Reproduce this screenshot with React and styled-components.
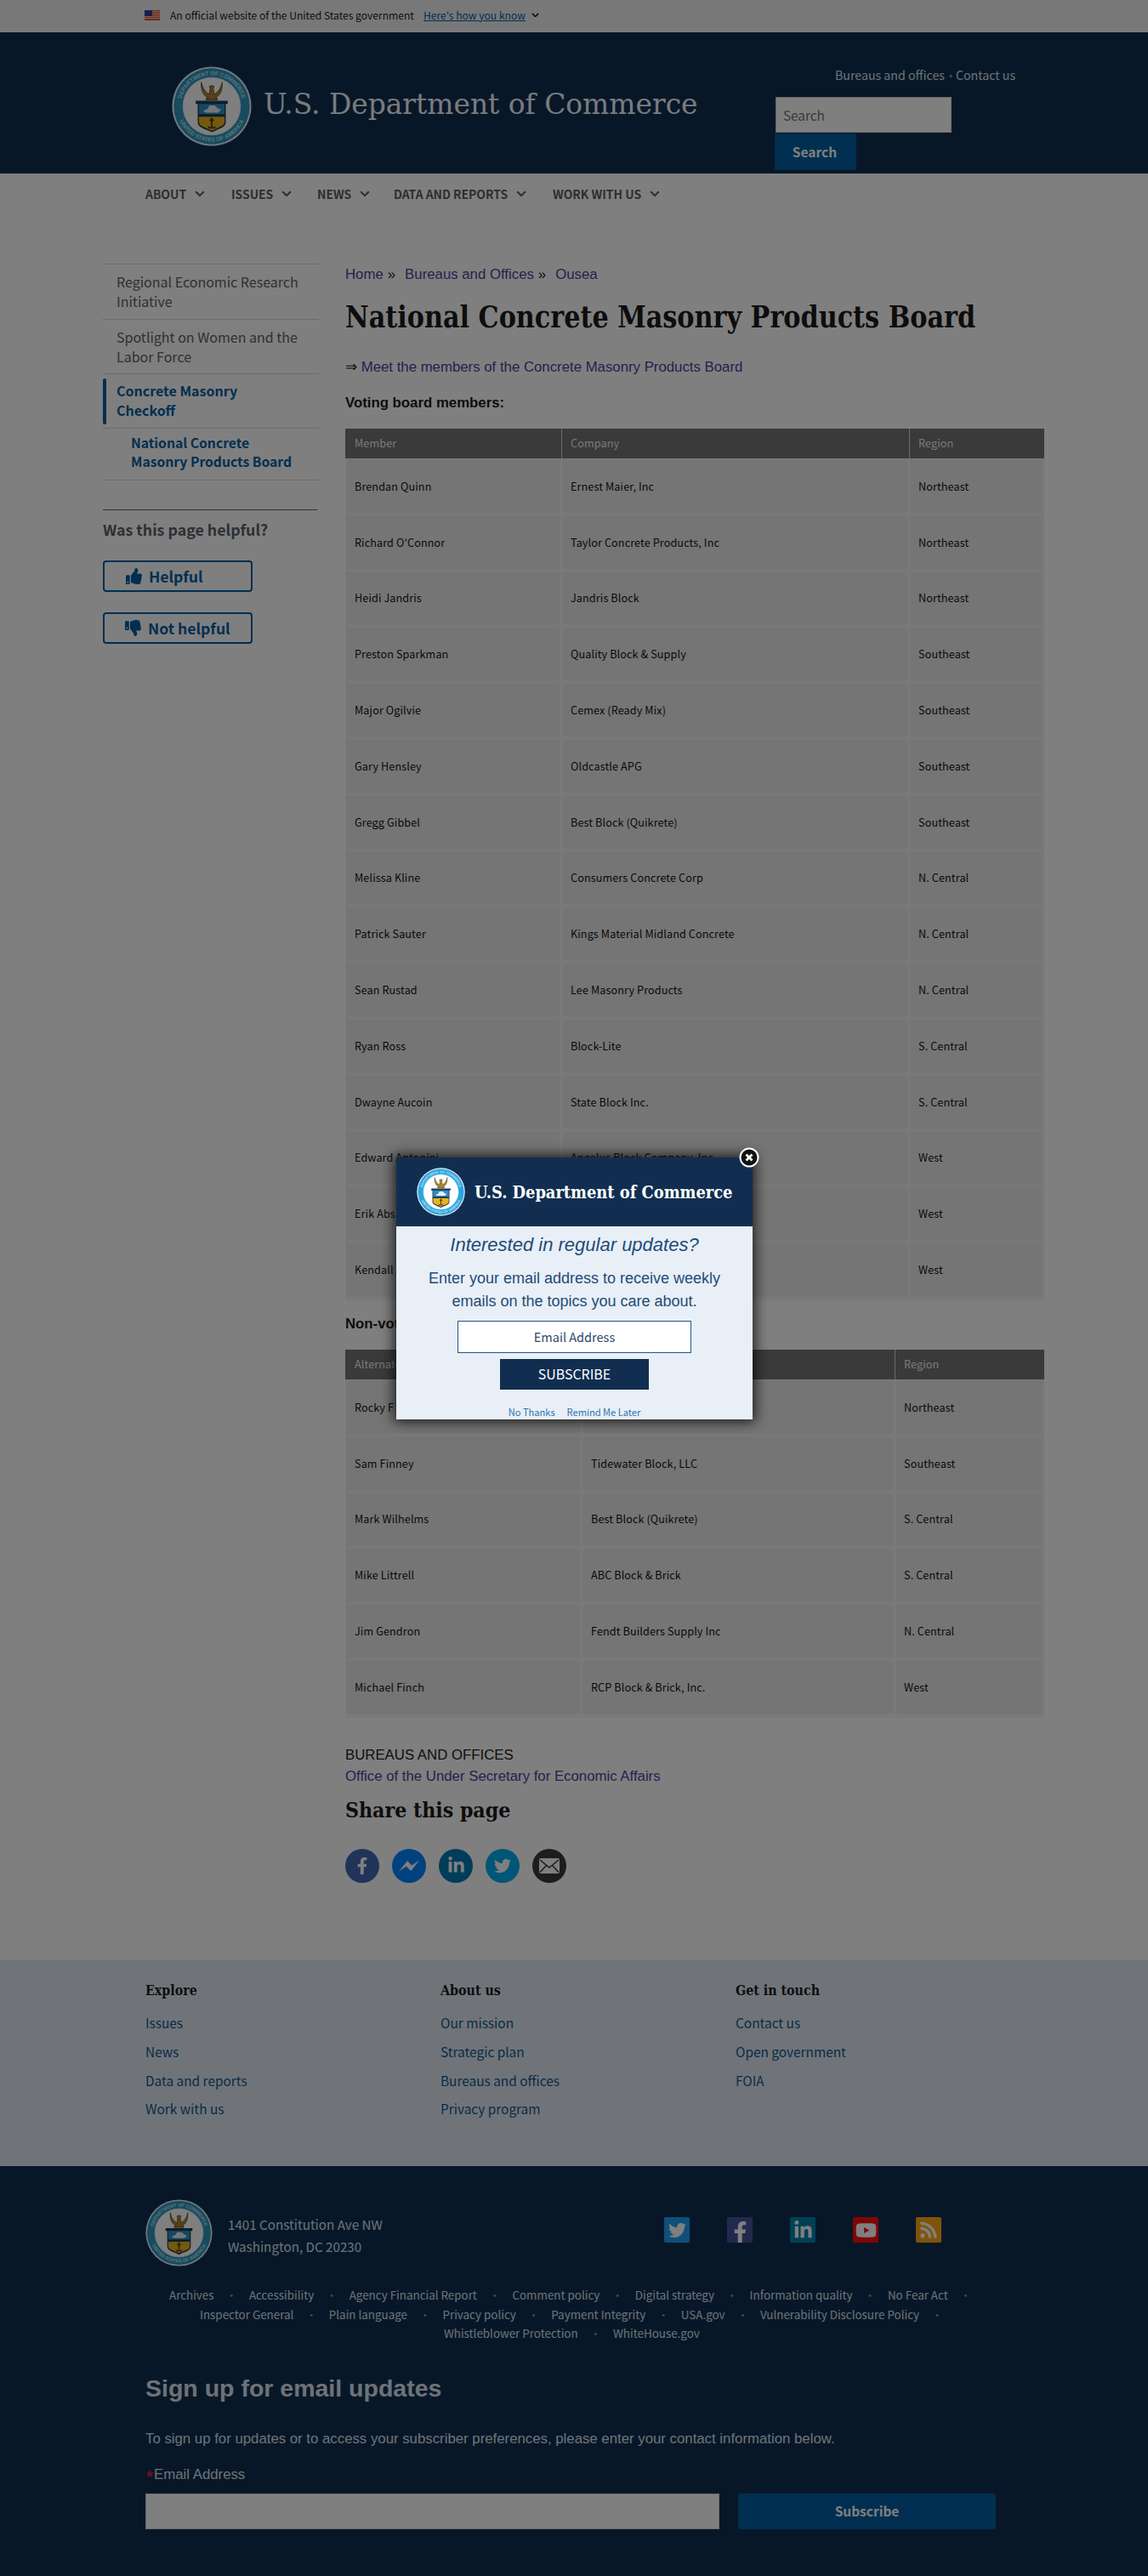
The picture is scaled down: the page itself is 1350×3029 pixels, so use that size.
import React from "react";
import styled, { createGlobalStyle, css } from "styled-components";
import {
  FaTwitter,
  FaFacebookF,
  FaLinkedinIn,
  FaYoutube,
  FaRss,
  FaThumbsUp,
  FaThumbsDown,
} from "react-icons/fa";

const humanist = `"Noto Sans CJK SC", "Noto Sans", sans-serif`;
const plain = `"Liberation Sans", Arial, sans-serif`;
const slab = `"DejaVu Serif Condensed", "DejaVu Serif", serif`;

const Global = createGlobalStyle`
  * { box-sizing: border-box; }
  body { margin: 0; background: #fff; font-family: ${plain}; font-size: 16.8px; color: #1b1b1b; }
  a { color: inherit; text-decoration: none; }
`;

const Page = styled.div`
  position: relative;
  width: 1350px;
  height: 3029px;
  overflow: hidden;
`;

const Shade = styled.div`
  position: absolute;
  inset: 0;
  background: rgba(0, 0, 0, 0.5);
`;

const SerifText = styled.span`
  display: inline-block;
  font-family: ${slab};
  font-stretch: condensed;
  font-weight: ${(p) => (p.$bold ? 700 : 400)};
  font-size: ${(p) => p.$size}px;
  line-height: ${(p) => p.$line}px;
  color: ${(p) => p.$color || "#1b1b1b"};
  white-space: nowrap;
  transform: scaleX(${(p) => p.$stretch});
  transform-origin: 0 50%;
`;

/* ---------- banner ---------- */
const Banner = styled.div`
  height: 38px;
  padding: 2px 0 0 170px;
  background: #f1f1f1;
  border-bottom: 5px solid #f6f2fa;
  display: flex;
  align-items: center;
  font-family: ${humanist};
  font-size: 12.1px;
  line-height: 20px;
  white-space: nowrap;
  svg { flex: none; }
`;
const BannerText = styled.span`
  margin-left: 12px;
  width: 298px;
`;
const BannerLink = styled.a`
  color: #005ea2;
  text-decoration: underline;
  margin-right: 7px;
`;

/* ---------- header ---------- */
const Header = styled.header`
  height: 166px;
  background: #112e51;
  padding-top: 40px;
  display: flex;
`;
const Brand = styled.div`
  margin-left: 202px;
  width: 709px;
  display: flex;
  gap: 14px;
  height: 94px;
  align-items: center;
`;
const BrandName = styled.div`
  padding-bottom: 6px;
`;
const Tools = styled.div`
  width: 300px;
`;
const ToolLinks = styled.div`
  display: flex;
  margin-left: 71px;
  margin-bottom: 16px;
  font: 14.2px/20px ${humanist};
  color: #dce4ef;
  white-space: nowrap;
`;
const ToolDot = styled.span`
  width: 13px;
  text-align: center;
  color: #8d9bb0;
`;
const SearchBox = styled.div`
  margin-left: 1px;
  width: 207px;
  height: 42px;
  padding-left: 8px;
  background: #fff;
  border: 1px solid #d6d7d9;
  font: 15.3px/41px ${humanist};
  color: #757575;
`;
const SearchButton = styled.div`
  margin-top: 1px;
  width: 96px;
  height: 43px;
  padding-right: 2px;
  border-radius: 0 3px 3px 3px;
  background: #005ea2;
  color: #fff;
  text-align: center;
  font: 700 15.5px/42px ${humanist};
`;

/* ---------- navigation ---------- */
const Nav = styled.nav`
  height: 47px;
  padding-left: 171px;
  display: flex;
  align-items: center;
  font: 700 13.9px/20px ${humanist};
  color: #565c65;
  white-space: nowrap;
`;
const NavItem = styled.div`
  width: ${(p) => p.$w}px;
  display: flex;
  align-items: center;
  gap: 10px;
`;

/* ---------- body ---------- */
const Body = styled.div`
  height: 2054px;
  padding: 59px 0 0 121px;
  display: flex;
  align-items: flex-start;
`;
const Sidebar = styled.aside`
  width: 254px;
  margin-right: 31px;
  font-family: ${humanist};
`;
const SideItem = styled.div`
  height: ${(p) => p.$h || 64}px;
  border-top: 1px solid #d6d7d9;
  padding: 9px 0 0 16px;
  font-size: 16px;
  line-height: 23px;
  color: #5b616b;
  white-space: pre-line;
  ${(p) =>
    p.$current &&
    css`
      font-weight: 700;
      color: #005ea2;
      display: flex;
      padding: 5px 0 0 0;
    `}
  ${(p) =>
    p.$nested &&
    css`
      font-weight: 700;
      color: #005ea2;
      line-height: 22px;
      font-size: 15.7px;
      padding: 6px 0 0 33px;
      border-bottom: 1px solid #d6d7d9;
    `}
`;
const CurrentBar = styled.div`
  width: 4px;
  height: 54px;
  border-radius: 3px;
  background: #005ea2;
  margin-right: 12px;
`;
const CurrentLabel = styled.div`
  padding-top: 3px;
`;
const Survey = styled.div`
  width: 252px;
  margin-top: 34px;
  border-top: 1px solid #5b616b;
  padding-top: 10px;
`;
const SurveyTitle = styled.div`
  font-size: 17.8px;
  line-height: 24px;
  font-weight: 700;
  color: #5b616b;
  margin-bottom: 25px;
  white-space: nowrap;
`;
const VoteButton = styled.div`
  width: 176px;
  height: 37px;
  margin-bottom: 24px;
  padding-left: ${(p) => p.$pad}px;
  border: 2px solid #005ea2;
  border-radius: 4px;
  display: flex;
  align-items: center;
  gap: 8px;
  font-weight: 700;
  font-size: 17.6px;
  line-height: 30px;
  color: #005ea2;
`;

const Main = styled.main`
  width: 822px;
`;
const Crumbs = styled.div`
  height: 41px;
  line-height: 26px;
  display: flex;
`;
const CrumbMark = styled.span`
  margin: 0 11px 0 5px;
`;
const Visited = styled.a`
  color: #573b9d;
`;
const Title = styled.h1`
  margin: 0 0 24px;
  height: 44px;
`;
const Line = styled.p`
  margin: 0 0 ${(p) => p.$gap || 0}px;
  line-height: ${(p) => p.$line || 26}px;
  font-weight: ${(p) => (p.$bold ? 700 : 400)};
`;

const Table = styled.div`
  font: 12.6px/20px ${humanist};
  letter-spacing: 0.12px;
  margin-bottom: ${(p) => p.$after}px;
  border-bottom: 3px solid #f4f4f4;
`;
const TableRow = styled.div`
  display: grid;
  grid-template-columns: ${(p) => p.$cols};
  height: ${(p) => (p.$head ? 35 : 65.8)}px;
`;
const HeadCell = styled.div`
  background: #757575;
  color: #f1f1f1;
  border-left: 1px solid #d6d7d9;
  padding: 7px 0 0 10px;
  &:first-child { border-left: none; padding-left: 11px; }
`;
const Cell = styled.div`
  background: #ebebeb;
  border: 2px solid #f2f2f2;
  padding-left: 9px;
  display: flex;
  align-items: center;
  color: #111;
`;

const ShareRow = styled.div`
  margin-top: 29px;
  display: flex;
  gap: 15px;
`;
const ShareDot = styled.div`
  width: 40px;
  height: 40px;
  border-radius: 50%;
  background: ${(p) => p.$bg};
  color: #fff;
  display: flex;
  align-items: center;
  justify-content: center;
`;

/* ---------- footer ---------- */
const LightFooter = styled.section`
  height: 242px;
  padding: 22px 0 0 171px;
  background: #e0e9f3;
  display: flex;
`;
const FooterColumn = styled.div`
  width: 347px;
  font: 15.4px/33.8px ${humanist};
  color: #14568f;
`;
const FooterHeading = styled.div`
  height: 35px;
  line-height: 24px;
`;
const DarkFooter = styled.section`
  height: 482px;
  background: #112e51;
  color: #dce4ef;
  padding: 39px 0 0 171px;
`;
const ContactRow = styled.div`
  display: flex;
  height: 78px;
`;
const Address = styled.div`
  margin-left: 18px;
  width: 513px;
  padding-top: 16px;
  font: 15.2px/26px ${humanist};
`;
const Tiles = styled.div`
  display: flex;
  gap: 44px;
  padding-top: 21px;
`;
const Tile = styled.div`
  width: 30px;
  height: 30px;
  border-radius: 2px;
  background: ${(p) => p.$bg};
  color: #fff;
  display: flex;
  align-items: ${(p) => (p.$low ? "flex-end" : "center")};
  justify-content: center;
`;
const Policies = styled.div`
  padding-top: 23px;
  height: 120px;
  font: 13.4px/22.6px ${humanist};
`;
const PolicyRow = styled.div`
  display: flex;
  padding-left: ${(p) => p.$indent}px;
  white-space: nowrap;
`;
const Dot = styled.span`
  width: 41.5px;
  text-align: center;
  color: #7f8ea6;
`;
const SignupTitle = styled.div`
  font-size: 28.5px;
  font-weight: 700;
  line-height: 36px;
  margin-top: 6px;
`;
const SignupText = styled.div`
  line-height: 24px;
  margin-top: 30px;
`;
const SignupLabel = styled.div`
  line-height: 24px;
  margin: 18px 0 10px;
  span {
    display: inline-block;
    width: 10px;
    padding-left: 1px;
    font-weight: 700;
    font-size: 20px;
    line-height: 18px;
    vertical-align: -4px;
    color: #e31c3d;
  }
`;
const SignupRow = styled.div`
  display: flex;
  gap: 22px;
`;
const SignupField = styled.div`
  width: 675px;
  height: 42px;
  background: #fff;
  border: 1px solid #d6d7d9;
`;
const SignupButton = styled.div`
  width: 303px;
  height: 42px;
  border-radius: 3px;
  background: #005ea2;
  color: #fff;
  text-align: center;
  font: 700 15.5px/41px ${humanist};
`;

/* ---------- dialog ---------- */
const Dialog = styled.div`
  position: absolute;
  left: 466px;
  top: 1361px;
  width: 419px;
  height: 308px;
  background: #e8eff6;
  box-shadow: 0 0 14px 3px rgba(0, 0, 0, 0.75);
  color: #1f4b7a;
  text-align: center;
`;
const DialogHead = styled.div`
  height: 81px;
  background: #112e51;
  display: flex;
  align-items: center;
  gap: 11px;
  padding-left: 24px;
`;
const DialogBody = styled.div`
  height: 227px;
  overflow: hidden;
  display: flex;
  flex-direction: column;
  align-items: center;
  padding-top: 8px;
`;
const DialogLead = styled.div`
  font-size: 22px;
  font-style: italic;
  line-height: 28px;
`;
const DialogText = styled.div`
  margin-top: 12px;
  font-size: 18px;
  line-height: 27px;
`;
const DialogField = styled.div`
  margin-top: 9px;
  width: 275px;
  height: 38px;
  flex: none;
  border: 1px solid #205493;
  background: #fff;
  font: 14.5px/35px ${humanist};
  color: #2e4a6b;
`;
const DialogButton = styled.div`
  margin-top: 7px;
  width: 175px;
  height: 36px;
  flex: none;
  background: #112e51;
  color: #fff;
  font: 15.9px/35px ${humanist};
`;
const DialogLinks = styled.div`
  display: flex;
  gap: 14px;
  margin-top: 17px;
  font: 11.1px/18px ${humanist};
  color: #2e73b0;
`;
const CloseButton = styled.div`
  position: absolute;
  right: -8px;
  top: -12px;
  width: 24px;
  height: 24px;
  svg { display: block; }
`;

/* ---------- drawings ---------- */
const Seal = ({ size, id, bright }) => (
  <svg width={size} height={size} viewBox="0 0 100 100">
    <defs>
      <path id={`${id}t`} d="M11 50a39 39 0 0 1 78 0" />
      <path id={`${id}b`} d="M6 50a44 44 0 0 0 88 0" />
    </defs>
    <circle cx="50" cy="50" r="49.5" fill="#e6f2f8" />
    <circle cx="50" cy="50" r="47.5" fill={bright ? "#2ba3e0" : "#2f97bd"} />
    <circle cx="50" cy="50" r="36" fill="#fff" stroke="#dceef6" strokeWidth="1" />
    <g fill="#b9e2f2" fontFamily="Liberation Sans" fontWeight="700" fontSize="7">
      <text textAnchor="middle">
        <textPath href={`#${id}t`} startOffset="50%">DEPARTMENT OF COMMERCE</textPath>
      </text>
      <text textAnchor="middle">
        <textPath href={`#${id}b`} startOffset="50%">UNITED STATES OF AMERICA</textPath>
      </text>
    </g>
    <path
      d="M37 20c2 9 6 13 10 15l1-7-1-3 3-1 3 1-1 3 1 7c4-2 8-6 10-15 1 10-3 17-8 19l-1 1h3v2H43v-2h3l-1-1c-5-2-9-9-8-19z"
      fill="#a8842c"
      stroke="#4a3b12"
      strokeWidth=".8"
    />
    <path d="M30 43h40v4h-2.500v23c0 7-9 8-17.500 12.500C41.500 78 32.500 77 32.500 70V47H30z" fill="#223a56" />
    <path d="M34 47h32v15H34z" fill="#2b8fc4" />
    <path d="M34 63h32v7c0 5-8 6-16 10.500C42 76 34 75 34 70z" fill="#e8b41c" />
    <path d="M39 56l6-3 2-4h7l4 4 4 1-4 4H43z" fill="#e8eef2" />
    <path d="M34 60h32v2.500H34z" fill="#1d2e44" />
    <path d="M49 64h2v13h-2zM47.500 66h5v3h-5zM45 74c2 3 8 3 10 0l-1 4h-8z" fill="#5a4414" />
  </svg>
);

const Flag = () => (
  <svg width="18" height="12" viewBox="0 0 18 12">
    <rect width="18" height="12" fill="#fff" />
    {[0, 2, 4, 6, 8, 10].map((y) => (
      <rect key={y} y={y} width="18" height="1.300" fill="#e0502f" />
    ))}
    <rect y="11" width="18" height="1" fill="#e0502f" />
    <rect width="9" height="7" fill="#2a3f9e" />
  </svg>
);

const Chevron = ({ size, color, weight }) => (
  <svg width={size} height={size * 0.6} viewBox="0 0 10 6">
    <path d="M1 1l4 4 4-4" fill="none" stroke={color} strokeWidth={weight} />
  </svg>
);

const Bolt = () => (
  <svg width="24" height="16" viewBox="0 0 26 16">
    <path d="M0 15L11 1.500l5.500 6L26 1 15.500 14.500l-6-6z" fill="#fff" />
  </svg>
);

const Envelope = () => (
  <svg width="24" height="18" viewBox="0 0 24 18">
    <rect width="24" height="18" rx="2" fill="#fff" />
    <path d="M1 2l11 9L23 2M1 16.500l7.500-8M23 16.500l-7.500-8" fill="none" stroke="#3a3a3a" strokeWidth="1.600" />
  </svg>
);

const nav = [
  ["ABOUT", 101],
  ["ISSUES", 101],
  ["NEWS", 90],
  ["DATA AND REPORTS", 187],
  ["WORK WITH US", 130],
];

const members = [
  ["Brendan Quinn", "Ernest Maier, Inc", "Northeast"],
  ["Richard O'Connor", "Taylor Concrete Products, Inc", "Northeast"],
  ["Heidi Jandris", "Jandris Block", "Northeast"],
  ["Preston Sparkman", "Quality Block & Supply", "Southeast"],
  ["Major Ogilvie", "Cemex (Ready Mix)", "Southeast"],
  ["Gary Hensley", "Oldcastle APG", "Southeast"],
  ["Gregg Gibbel", "Best Block (Quikrete)", "Southeast"],
  ["Melissa Kline", "Consumers Concrete Corp", "N. Central"],
  ["Patrick Sauter", "Kings Material Midland Concrete", "N. Central"],
  ["Sean Rustad", "Lee Masonry Products", "N. Central"],
  ["Ryan Ross", "Block-Lite", "S. Central"],
  ["Dwayne Aucoin", "State Block Inc.", "S. Central"],
  ["Edward Antonini", "Angelus Block Company, Inc.", "West"],
  ["Erik Abs", "", "West"],
  ["Kendall A", "", "West"],
];

const alternates = [
  ["Rocky F", "", "Northeast"],
  ["Sam Finney", "Tidewater Block, LLC", "Southeast"],
  ["Mark Wilhelms", "Best Block (Quikrete)", "S. Central"],
  ["Mike Littrell", "ABC Block & Brick", "S. Central"],
  ["Jim Gendron", "Fendt Builders Supply Inc", "N. Central"],
  ["Michael Finch", "RCP Block & Brick, Inc.", "West"],
];

const footerColumns = [
  ["Explore", ["Issues", "News", "Data and reports", "Work with us"]],
  ["About us", ["Our mission", "Strategic plan", "Bureaus and offices", "Privacy program"]],
  ["Get in touch", ["Contact us", "Open government", "FOIA"]],
];

const policies = [
  [28, ["Archives", "Accessibility", "Agency Financial Report", "Comment policy", "Digital strategy", "Information quality", "No Fear Act"], true],
  [64, ["Inspector General", "Plain language", "Privacy policy", "Payment Integrity", "USA.gov", "Vulnerability Disclosure Policy"], true],
  [351, ["Whistleblower Protection", "WhiteHouse.gov"], false],
];

const BoardTable = ({ head, rows, cols, after }) => (
  <Table $after={after}>
    <TableRow $cols={cols} $head>
      {head.map((h, i) => (
        <HeadCell key={i}>{h}</HeadCell>
      ))}
    </TableRow>
    {rows.map((row) => (
      <TableRow key={row[0]} $cols={cols}>
        {row.map((text, i) => (
          <Cell key={i}>{text}</Cell>
        ))}
      </TableRow>
    ))}
  </Table>
);

export default function App() {
  return (
    <Page>
      <Global />
      <Banner>
        <Flag />
        <BannerText>An official website of the United States government</BannerText>
        <BannerLink>Here's how you know</BannerLink>
        <Chevron size={9} color="#1b1b1b" weight={1.8} />
      </Banner>

      <Header>
        <Brand>
          <Seal size={94} id="h" />
          <BrandName>
            <SerifText $size={34} $line={44} $stretch={1.075} $color="#f4f7fb">
              U.S. Department of Commerce
            </SerifText>
          </BrandName>
        </Brand>
        <Tools>
          <ToolLinks>
            Bureaus and offices<ToolDot>•</ToolDot>Contact us
          </ToolLinks>
          <SearchBox>Search</SearchBox>
          <SearchButton>Search</SearchButton>
        </Tools>
      </Header>

      <Nav>
        {nav.map(([label, w]) => (
          <NavItem key={label} $w={w}>
            {label}
            <Chevron size={12} color="#5b616b" weight={1.8} />
          </NavItem>
        ))}
      </Nav>

      <Body>
        <Sidebar>
          <SideItem $h={65}>{"Regional Economic Research\nInitiative"}</SideItem>
          <SideItem>{"Spotlight on Women and the\nLabor Force"}</SideItem>
          <SideItem $current>
            <CurrentBar />
            <CurrentLabel>{"Concrete Masonry\nCheckoff"}</CurrentLabel>
          </SideItem>
          <SideItem $nested $h={62}>{"National Concrete\nMasonry Products Board"}</SideItem>
          <Survey>
            <SurveyTitle>Was this page helpful?</SurveyTitle>
            <VoteButton $pad={25}>
              <FaThumbsUp size={19} />
              Helpful
            </VoteButton>
            <VoteButton $pad={24}>
              <FaThumbsDown size={19} />
              Not helpful
            </VoteButton>
          </Survey>
        </Sidebar>

        <Main>
          <Crumbs>
            <Visited>Home</Visited>
            <CrumbMark>»</CrumbMark>
            <Visited>Bureaus and Offices</Visited>
            <CrumbMark>»</CrumbMark>
            <Visited>Ousea</Visited>
          </Crumbs>
          <Title>
            <SerifText $bold $size={35} $line={44} $stretch={0.961}>
              National Concrete Masonry Products Board
            </SerifText>
          </Title>
          <Line $gap={16}>
            ⇒ <Visited>Meet the members of the Concrete Masonry Products Board</Visited>
          </Line>
          <Line $bold $gap={17}>Voting board members:</Line>
          <BoardTable
            head={["Member", "Company", "Region"]}
            rows={members}
            cols="254px 409px 159px"
            after={15}
          />
          <Line $bold $gap={17}>Non-voting board members:</Line>
          <BoardTable
            head={["Alternate", "", "Region"]}
            rows={alternates}
            cols="278px 368px 176px"
            after={31}
          />
          <Line $line={25}>BUREAUS AND OFFICES</Line>
          <Line $line={25} $gap={12}>
            <Visited>Office of the Under Secretary for Economic Affairs</Visited>
          </Line>
          <SerifText $bold $size={25} $line={32} $stretch={0.985}>
            Share this page
          </SerifText>
          <ShareRow>
            <ShareDot $bg="#4267b2"><FaFacebookF size={20} /></ShareDot>
            <ShareDot $bg="#0084ff"><Bolt /></ShareDot>
            <ShareDot $bg="#007bb5"><FaLinkedinIn size={21} /></ShareDot>
            <ShareDot $bg="#00aced"><FaTwitter size={20} /></ShareDot>
            <ShareDot $bg="#3a3a3a"><Envelope /></ShareDot>
          </ShareRow>
        </Main>
      </Body>

      <LightFooter>
        {footerColumns.map(([heading, links]) => (
          <FooterColumn key={heading}>
            <FooterHeading>
              <SerifText $bold $size={16.5} $line={24} $stretch={0.96}>{heading}</SerifText>
            </FooterHeading>
            {links.map((l) => (
              <div key={l}>{l}</div>
            ))}
          </FooterColumn>
        ))}
      </LightFooter>

      <DarkFooter>
        <ContactRow>
          <Seal size={79} id="f" />
          <Address>
            1401 Constitution Ave NW
            <br />
            Washington, DC 20230
          </Address>
          <Tiles>
            <Tile $bg="#1da1f2"><FaTwitter size={21} /></Tile>
            <Tile $bg="#44539b" $low><FaFacebookF size={25} /></Tile>
            <Tile $bg="#0083ad"><FaLinkedinIn size={23} /></Tile>
            <Tile $bg="#ff0d0d"><FaYoutube size={25} /></Tile>
            <Tile $bg="#ffa812"><FaRss size={22} /></Tile>
          </Tiles>
        </ContactRow>
        <Policies>
          {policies.map(([indent, items, trailing]) => (
            <PolicyRow key={indent} $indent={indent}>
              {items.map((item, i) => (
                <React.Fragment key={item}>
                  <span>{item}</span>
                  {(trailing || i < items.length - 1) && <Dot>•</Dot>}
                </React.Fragment>
              ))}
            </PolicyRow>
          ))}
        </Policies>
        <SignupTitle>Sign up for email updates</SignupTitle>
        <SignupText>
          To sign up for updates or to access your subscriber preferences, please enter your contact information below.
        </SignupText>
        <SignupLabel>
          <span>*</span>Email Address
        </SignupLabel>
        <SignupRow>
          <SignupField />
          <SignupButton>Subscribe</SignupButton>
        </SignupRow>
      </DarkFooter>

      <Shade />

      <Dialog>
        <DialogHead>
          <Seal size={57} id="d" bright />
          <SerifText $bold $size={20} $line={28} $stretch={0.992} $color="#fff">
            U.S. Department of Commerce
          </SerifText>
        </DialogHead>
        <DialogBody>
          <DialogLead>Interested in regular updates?</DialogLead>
          <DialogText>
            Enter your email address to receive weekly
            <br />
            emails on the topics you care about.
          </DialogText>
          <DialogField>Email Address</DialogField>
          <DialogButton>SUBSCRIBE</DialogButton>
          <DialogLinks>
            <a>No Thanks</a>
            <a>Remind Me Later</a>
          </DialogLinks>
        </DialogBody>
        <CloseButton>
          <svg width="24" height="24" viewBox="0 0 24 24">
            <circle cx="12" cy="12" r="10.500" fill="#111" stroke="#fff" strokeWidth="2" />
            <path d="M8.500 8.500l7 7M15.500 8.500l-7 7" stroke="#fff" strokeWidth="2.800" />
          </svg>
        </CloseButton>
      </Dialog>
    </Page>
  );
}
